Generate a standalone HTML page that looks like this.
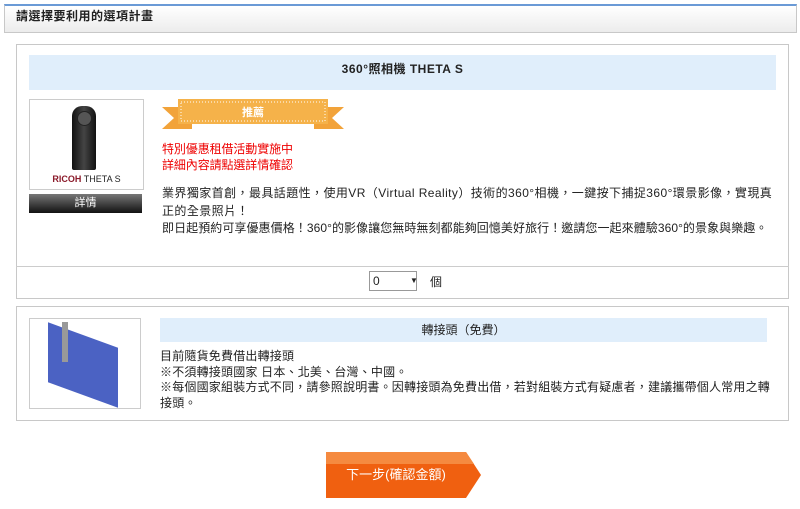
<!DOCTYPE html>
<html><head><meta charset="utf-8"><style>
body{margin:0;width:800px;height:509px;background:#fff;font-family:"Liberation Sans","Noto Sans CJK TC",sans-serif;font-size:12px;color:#222;position:relative;overflow:hidden}
.a{position:absolute}
.hdr{left:4px;top:4px;width:791px;height:26px;border:1px solid #c8c8c8;border-top:2px solid #6a9ad6;background:linear-gradient(#fff,#ececec)}
.box{border:1px solid #c8c8c8;background:#fff}
.bar{background:#e0eefb}
.nw{white-space:nowrap}
</style></head><body>
<div class="a hdr"></div>
<div class="a" style="left:16px;top:8px;font-weight:bold;font-size:12px;line-height:16px;letter-spacing:0.5px">請選擇要利用的選項計畫</div>

<div class="a box" style="left:16px;top:44px;width:771px;height:253px"></div>
<div class="a bar" style="left:29px;top:55px;width:747px;height:35px"></div>
<div class="a" style="left:29px;top:61px;width:747px;text-align:center;font-weight:bold;line-height:16px;letter-spacing:0.5px">360°照相機 THETA S</div>
<div class="a" style="left:29px;top:99px;width:113px;height:89px;border:1px solid #ccc"></div>
<div class="a" style="left:72px;top:106px;width:24px;height:64px;background:linear-gradient(90deg,#111,#444,#111);border-radius:10px 10px 2px 2px"></div>
<div class="a" style="left:77px;top:111px;width:13px;height:13px;border-radius:50%;background:#555;border:1px solid #222"></div>
<div class="a" style="left:29px;top:174px;width:115px;text-align:center;font-size:9px"><b style="color:#8b1a2a">RICOH</b> THETA S</div>
<div class="a" style="left:29px;top:194px;width:113px;height:19px;background:linear-gradient(#777,#111);color:#fff;text-align:center;line-height:19px;font-size:11px">詳情</div>
<svg class="a" style="left:162px;top:99px" width="182" height="32"><polygon points="0,8 30,8 30,30 0,30 12,19" fill="#f2a33a"/><polygon points="182,8 152,8 152,30 182,30 170,19" fill="#f2a33a"/><rect x="16" y="0" width="150" height="25" fill="#f5b24a"/><rect x="19" y="3" width="144" height="19" fill="none" stroke="#fff" stroke-dasharray="1 2"/><text x="91" y="17" text-anchor="middle" fill="#fff" font-size="11" font-weight="bold" font-family="Liberation Sans,Noto Sans CJK TC,sans-serif">推薦</text></svg>
<div class="a" style="left:162px;top:141px;color:#e00;line-height:16px;font-size:12px;letter-spacing:-0.1px">特別優惠租借活動實施中<br>詳細內容請點選詳情確認</div>
<div class="a nw" style="left:162px;top:185px;line-height:17.5px;font-size:12px;letter-spacing:0.42px">業界獨家首創，最具話題性，使用VR（Virtual Reality）技術的360°相機，一鍵按下捕捉360°環景影像，實現真<br>正的全景照片！<br><span style="letter-spacing:0.07px">即日起預約可享優惠價格！360°的影像讓您無時無刻都能夠回憶美好旅行！邀請您一起來體驗360°的景象與樂趣。</span></div>
<div class="a" style="left:16px;top:266px;width:773px;border-top:1px solid #ccc"></div>
<div class="a" style="left:369px;top:271px;width:46px;height:18px;border:1px solid #999;background:#fff;font-size:12px;line-height:18px;text-indent:3px">0<span style="position:absolute;left:37px;font-size:8px">▼</span></div>
<div class="a" style="left:430px;top:273px">個</div>

<div class="a box" style="left:16px;top:306px;width:771px;height:113px"></div>
<div class="a" style="left:29px;top:318px;width:110px;height:89px;border:1px solid #ccc"></div>
<div class="a" style="left:48px;top:335px;width:70px;height:60px;background:#2b47b8;transform:skewY(20deg);opacity:.85"></div>
<div class="a" style="left:62px;top:322px;width:6px;height:40px;background:#999"></div>
<div class="a bar" style="left:160px;top:318px;width:607px;height:24px"></div>
<div class="a" style="left:160px;top:322px;width:607px;text-align:center;font-size:12px;line-height:16px">轉接頭（免費）</div>
<div class="a nw" style="left:160px;top:349px;font-size:12px;line-height:15.7px;letter-spacing:0.2px">目前隨貨免費借出轉接頭<br>※不須轉接頭國家 日本、北美、台灣、中國。<br>※每個國家組裝方式不同，請參照說明書。因轉接頭為免費出借，若對組裝方式有疑慮者，建議攜帶個人常用之轉<br>接頭。</div>

<svg class="a" style="left:326px;top:452px" width="156" height="47"><polygon points="0,0 140,0 155,23 140,46 0,46" fill="#f06010"/><polygon points="0,0 140,0 148,12 0,12" fill="#f58a40"/></svg>
<div class="a" style="left:326px;top:466px;width:140px;text-align:center;color:#fff;font-size:13px;line-height:18px">下一步(確認金額)</div>
</body></html>
